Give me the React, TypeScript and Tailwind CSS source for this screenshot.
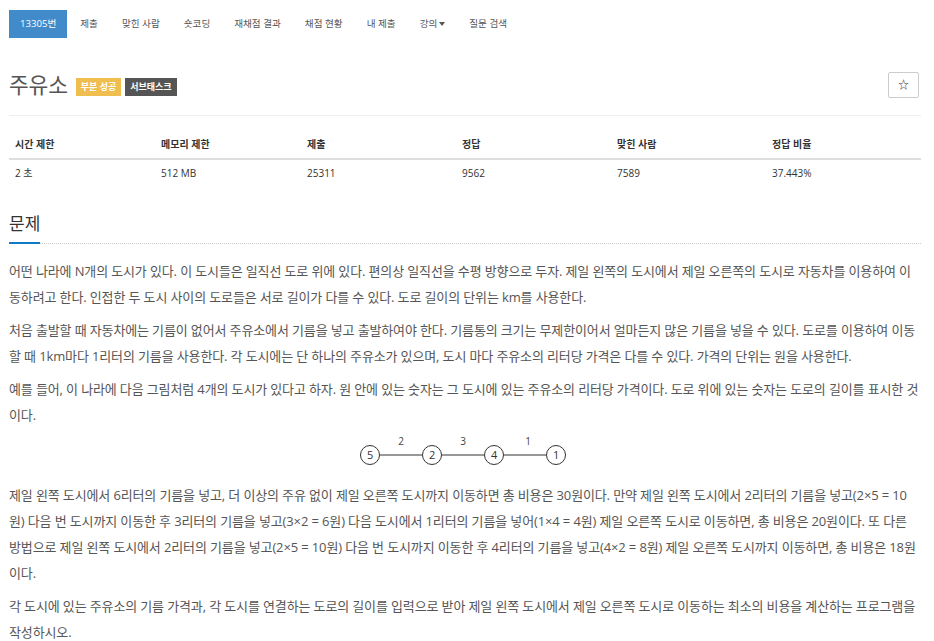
const tabs = ["제출", "맞힌 사람", "숏코딩", "재채점 결과", "채점 현황", "내 제출", "강의", "질문 검색"];

const headers = ["시간 제한", "메모리 제한", "제출", "정답", "맞힌 사람", "정답 비율"];
const values = ["2 초", "512 MB", "25311", "9562", "7589", "37.443%"];

function Diagram() {
  const xs = [12, 74, 136, 198];
  const nodes = ["5", "2", "4", "1"];
  const edges = ["2", "3", "1"];
  return (
    <svg width="210" height="40" viewBox="0 0 210 40" className="block mx-auto -translate-x-[2px]">
      {edges.map((e, i) => (
        <g key={i}>
          <line x1={xs[i] + 10} y1="20" x2={xs[i + 1] - 10} y2="20" stroke="#333" strokeWidth="1" />
          <text x={(xs[i] + xs[i + 1]) / 2 + (i === 2 ? 3 : 0)} y="10" fontSize="10" fill="#444" textAnchor="middle" fontFamily="Open Sans, sans-serif">
            {e}
          </text>
        </g>
      ))}
      {nodes.map((n, i) => (
        <g key={i}>
          <circle cx={xs[i]} cy="20" r="9.5" fill="#fff" stroke="#333" strokeWidth="1" />
          <text x={xs[i]} y="24" fontSize="11" fill="#333" textAnchor="middle" fontFamily="Open Sans, sans-serif">
            {n}
          </text>
        </g>
      ))}
    </svg>
  );
}

export default function App() {
  return (
    <div className="bg-white min-h-[641px] pl-[9px] pr-[13px] pt-[10px] text-[#555] font-['Open_Sans','Noto_Sans_CJK_KR',sans-serif]">
      <ul className="flex items-center h-[28px] text-[9.6px]">
        <li className="h-full px-[11px] flex items-center bg-[#428bca] text-white">13305번</li>
        {tabs.map((t) => (
          <li key={t} className="h-full ml-[2px] px-[11px] flex items-center text-[#555]">
            {t}
            {t === "강의" && (
              <span className="ml-[2px] inline-block w-0 h-0 border-l-[3px] border-r-[3px] border-t-[4px] border-l-transparent border-r-transparent border-t-[#555]" />
            )}
          </li>
        ))}
      </ul>

      <div className="flex items-center justify-between mt-[34px] h-[26px]">
        <div className="flex items-center">
          <h1 className="text-[21.5px] leading-none text-[#555] tracking-[-0.2px]">주유소</h1>
          <span className="ml-[8px] h-[18px] px-[5px] flex items-center bg-[#f0bd4f] text-white text-[9px] font-bold mt-[4px]">
            부분 성공
          </span>
          <span className="ml-[4px] h-[18px] px-[5px] flex items-center bg-[#555] text-white text-[9px] font-bold mt-[4px]">
            서브태스크
          </span>
        </div>
        <button className="w-[31px] h-[26px] mr-[2px] border border-[#ccc] rounded-[2px] flex items-center justify-center text-[11px] text-[#333]">
          ☆
        </button>
      </div>

      <div className="mt-[17px] border-t border-[#eee]" />

      <div className="mt-[14px] text-[10px]">
        <div className="grid grid-cols-[146px_146px_155px_155px_155px_1fr] h-[30px] items-center border-b-2 border-[#ddd] font-bold text-[#333]">
          {headers.map((h) => (
            <div key={h} className="pl-[6px]">{h}</div>
          ))}
        </div>
        <div className="grid grid-cols-[146px_146px_155px_155px_155px_1fr] h-[27px] items-center text-[#333]">
          {values.map((v) => (
            <div key={v} className="pl-[6px]">{v}</div>
          ))}
        </div>
      </div>

      <div className="mt-[22px] border-b border-dotted border-[#ccc]">
        <h2 className="text-[17px] leading-[30px] text-[#333] inline-block pb-[3px] border-b-2 border-[#0f7bc7] -mb-[1px]">
          문제
        </h2>
      </div>

      <div className="mt-[14px] text-[13px] leading-[26px] tracking-[-0.13px] text-[#555]">
        <p className="mb-[7px]">
          어떤 나라에 N개의 도시가 있다. 이 도시들은 일직선 도로 위에 있다. 편의상 일직선을 수평 방향으로 두자. 제일 왼쪽의 도시에서 제일 오른쪽의 도시로 자동차를 이용하여 이동하려고 한다. 인접한 두 도시 사이의 도로들은 서로 길이가 다를 수 있다. 도로 길이의 단위는 km를 사용한다.
        </p>
        <p className="mb-[7px]">
          처음 출발할 때 자동차에는 기름이 없어서 주유소에서 기름을 넣고 출발하여야 한다. 기름통의 크기는 무제한이어서 얼마든지 많은 기름을 넣을 수 있다. 도로를 이용하여 이동할 때 1km마다 1리터의 기름을 사용한다. 각 도시에는 단 하나의 주유소가 있으며, 도시 마다 주유소의 리터당 가격은 다를 수 있다. 가격의 단위는 원을 사용한다.
        </p>
        <p className="mb-[7px]">
          예를 들어, 이 나라에 다음 그림처럼 4개의 도시가 있다고 하자. 원 안에 있는 숫자는 그 도시에 있는 주유소의 리터당 가격이다. 도로 위에 있는 숫자는 도로의 길이를 표시한 것이다.
        </p>
        <div className="mb-[7px]">
          <Diagram />
        </div>
        <p className="mb-[7px]">
          제일 왼쪽 도시에서 6리터의 기름을 넣고, 더 이상의 주유 없이 제일 오른쪽 도시까지 이동하면 총 비용은 30원이다. 만약 제일 왼쪽 도시에서 2리터의 기름을 넣고(2×5 = 10원) 다음 번 도시까지 이동한 후 3리터의 기름을 넣고(3×2 = 6원) 다음 도시에서 1리터의 기름을 넣어(1×4 = 4원) 제일 오른쪽 도시로 이동하면, 총 비용은 20원이다. 또 다른 방법으로 제일 왼쪽 도시에서 2리터의 기름을 넣고(2×5 = 10원) 다음 번 도시까지 이동한 후 4리터의 기름을 넣고(4×2 = 8원) 제일 오른쪽 도시까지 이동하면, 총 비용은 18원이다.
        </p>
        <p className="mb-[7px]">
          각 도시에 있는 주유소의 기름 가격과, 각 도시를 연결하는 도로의 길이를 입력으로 받아 제일 왼쪽 도시에서 제일 오른쪽 도시로 이동하는 최소의 비용을 계산하는 프로그램을 작성하시오.
        </p>
      </div>
    </div>
  );
}
